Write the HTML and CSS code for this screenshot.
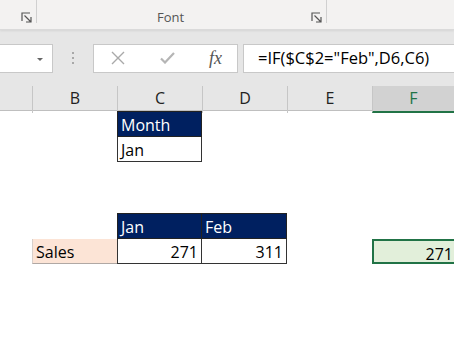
FILE: index.html
```html
<!DOCTYPE html>
<html lang="en">
<head>
    <meta charset="UTF-8">
    <title>Sheet</title>
    <link rel="stylesheet" href="styles.css">
</head>
<body>
    <!-- Лента -->
    <div class="ribbon">
        <div class="group group-left">
            <svg class="launcher" width="11" height="11" viewBox="0 0 11 11"><path d="M1 9V1h8" fill="none" stroke="#555" stroke-width="1.2"/><path d="M3.5 3.5l6 6M5 10h5V5" fill="none" stroke="#555" stroke-width="1.2"/></svg>
        </div>
        <div class="group group-font">
            <span class="group-label">Font</span>
            <svg class="launcher" width="11" height="11" viewBox="0 0 11 11"><path d="M1 9V1h8" fill="none" stroke="#555" stroke-width="1.2"/><path d="M3.5 3.5l6 6M5 10h5V5" fill="none" stroke="#555" stroke-width="1.2"/></svg>
        </div>
    </div>

    <!-- Строка формул -->
    <div class="formula-row">
        <div class="name-box"><span class="caret"></span></div>
        <div class="grip"><i></i><i></i><i></i></div>
        <div class="fx-buttons">
            <svg width="14" height="14" viewBox="0 0 14 14"><path d="M1 1l12 12M13 1L1 13" stroke="#a9a9a9" stroke-width="1.4"/></svg>
            <svg width="15" height="12" viewBox="0 0 15 12"><path d="M1 6.5l4 4L14 1" fill="none" stroke="#b5b5b5" stroke-width="2.2"/></svg>
            <span class="fx">fx</span>
        </div>
        <div class="formula">=IF($C$2="Feb",D6,C6)</div>
    </div>

    <!-- Заголовки столбцов -->
    <div class="col-heads">
        <div class="col-head first"></div>
        <div class="col-head">B</div>
        <div class="col-head">C</div>
        <div class="col-head">D</div>
        <div class="col-head">E</div>
        <div class="col-head selected">F</div>
    </div>

    <!-- Лист -->
    <div class="sheet">
        <div></div><div></div><div class="cell head">Month</div><div></div><div></div><div></div>
        <div></div><div></div><div class="cell box">Jan</div><div></div><div></div><div></div>
        <div></div><div></div><div></div><div></div><div></div><div></div>
        <div></div><div></div><div></div><div></div><div></div><div></div>
        <div></div><div></div><div class="cell head">Jan</div><div class="cell head no-left">Feb</div><div></div><div></div>
        <div></div><div class="cell label">Sales</div><div class="cell box num">271</div><div class="cell box num no-left">311</div><div></div><div class="cell active num">271</div>
    </div>
</body>
</html>
```

FILE: styles.css
```css
/* Общие настройки */
body {
    margin: 0;
    width: 454px;
    height: 341px;
    overflow: hidden;
    background: #fff;
    font-family: "Open Sans", "Noto Sans", sans-serif;
}

/* Лента */
.ribbon {
    display: flex;
    height: 29px;
    background-color: #f3f2f1;
    border-bottom: 1px solid #dadada;
    box-shadow: 0 1px 2px rgba(0,0,0,.08);
    position: relative;
}

.group {
    position: relative;
    height: 23px;
    border-right: 1px solid #d0d0d0;
}

.group-left {
    width: 36px;
}

.group-font {
    width: 289px;
}

.group-label {
    position: absolute;
    left: 120px;
    top: 8px;
    font-size: 13px;
    color: #555;
}

.launcher {
    position: absolute;
    right: 4px;
    bottom: 0;
}

/* Строка формул */
.formula-row {
    display: flex;
    align-items: center;
    height: 56px;
    background-color: #e6e6e6;
}

.name-box,
.fx-buttons,
.formula {
    height: 29px;
    background: #fff;
    border: 1px solid #c8c8c8;
    box-sizing: border-box;
}

.name-box {
    position: relative;
    width: 53px;
    border-left: none;
}

.caret {
    position: absolute;
    right: 9px;
    top: 13px;
    border-left: 3px solid transparent;
    border-right: 3px solid transparent;
    border-top: 3px solid #666;
}

.grip {
    width: 40px;
    display: flex;
    flex-direction: column;
    align-items: center;
    gap: 3px;
}

.grip i {
    width: 2px;
    height: 2px;
    background: #a8a8a8;
}

.fx-buttons {
    width: 145px;
    display: flex;
    align-items: center;
    justify-content: space-between;
    padding: 0 15px 0 17px;
}

.fx {
    font-family: "Liberation Serif", serif;
    font-style: italic;
    font-size: 18px;
    color: #555;
}

.formula {
    flex: 1;
    margin-left: 5px;
    margin-right: -5px;
    padding-left: 14px;
    font-size: 16.5px;
    line-height: 26px;
    color: #000;
}

/* Заголовки столбцов */
.col-heads {
    display: grid;
    grid-template-columns: 32px 85px 85px 85px 85px 1fr;
    height: 25px;
    background: #e6e6e6;
    border-bottom: 1px solid #bfbfbf;
    box-sizing: border-box;
}

.col-head {
    border-left: 1px solid #c6c6c6;
    text-align: center;
    font-size: 16px;
    line-height: 25px;
    color: #222;
}

.col-head.first {
    border-left: none;
}

.col-head.selected {
    background: #d2d2d2;
    color: #217346;
    border-bottom: 2px solid #217346;
}

/* Лист */
.sheet {
    display: grid;
    grid-template-columns: 32px 85px 85px 85px 85px 1fr;
    grid-auto-rows: 25.5px;
}

.cell {
    font-size: 16px;
    line-height: 24px;
    padding: 1px 3px 0;
    box-sizing: border-box;
    white-space: nowrap;
}

.head {
    background: #002060;
    color: #fff;
    border: 1px solid #222;
}

.box {
    border: 1px solid #333;
    border-top: none;
}

.no-left {
    border-left: none;
}

.num {
    text-align: right;
}

.label {
    background: #fce4d6;
    border-left: 1px solid #d8cfca;
    border-bottom: 1px solid #b0a8a4;
}

.active {
    background: #e2efda;
    border: 2px solid #217346;
    margin-right: -4px;
}
```
